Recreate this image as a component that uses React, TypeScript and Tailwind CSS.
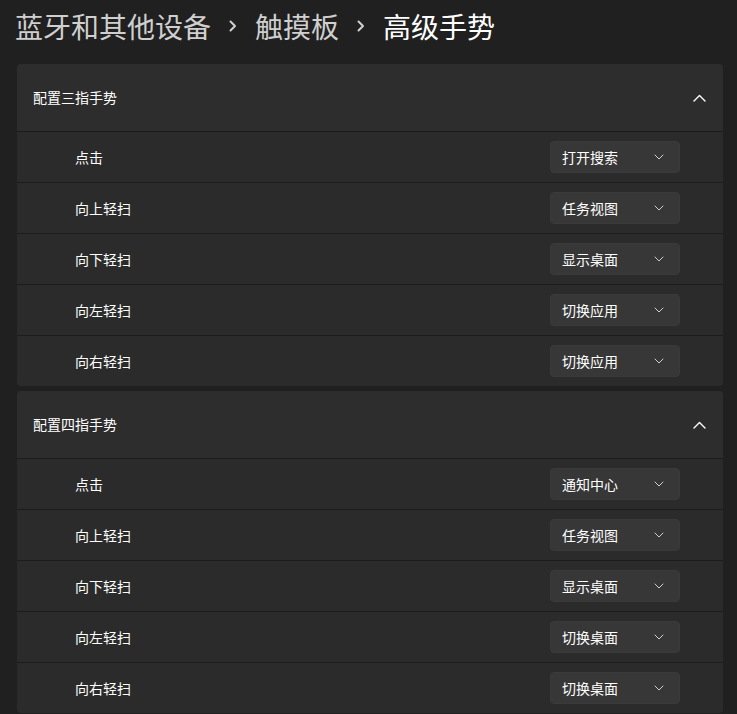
import React from "react";

const font = { fontFamily: '"Noto Sans CJK SC", "Noto Sans", sans-serif' };

type Row = { label: string; value: string };

const groups: { title: string; rows: Row[] }[] = [
  {
    title: "配置三指手势",
    rows: [
      { label: "点击", value: "打开搜索" },
      { label: "向上轻扫", value: "任务视图" },
      { label: "向下轻扫", value: "显示桌面" },
      { label: "向左轻扫", value: "切换应用" },
      { label: "向右轻扫", value: "切换应用" },
    ],
  },
  {
    title: "配置四指手势",
    rows: [
      { label: "点击", value: "通知中心" },
      { label: "向上轻扫", value: "任务视图" },
      { label: "向下轻扫", value: "显示桌面" },
      { label: "向左轻扫", value: "切换桌面" },
      { label: "向右轻扫", value: "切换桌面" },
    ],
  },
];

function ChevronDown() {
  return (
    <svg width="10" height="6" viewBox="0 0 10 6" fill="none">
      <path d="M1 1l4 4 4-4" stroke="#cfcfcf" strokeWidth="1" strokeLinecap="round" strokeLinejoin="round" />
    </svg>
  );
}

function ChevronUp() {
  return (
    <svg width="13" height="8" viewBox="0 0 13 8" fill="none">
      <path d="M1 7l5.5-5.5L12 7" stroke="#ffffff" strokeWidth="1.4" strokeLinecap="round" strokeLinejoin="round" />
    </svg>
  );
}

function BreadChevron() {
  return (
    <svg width="10" height="14" viewBox="0 0 10 14" fill="none">
      <path d="M2.5 2.5l4.5 4.5-4.5 4.5" stroke="#d0d0d0" strokeWidth="2" strokeLinecap="round" strokeLinejoin="round" />
    </svg>
  );
}

export default function App() {
  return (
    <div className="w-[737px] h-[714px] overflow-hidden bg-[#202020] text-white" style={font}>
      <div className="flex items-center h-[53px] pl-[15px] pb-[2px] text-[28px] leading-none">
        <span className="text-[#cfcfcf]">蓝牙和其他设备</span>
        <span className="mx-[17px] flex items-center"><BreadChevron /></span>
        <span className="text-[#cfcfcf]">触摸板</span>
        <span className="mx-[17px] flex items-center"><BreadChevron /></span>
        <span className="text-white">高级手势</span>
      </div>
      <div className="flex flex-col gap-[5px] mt-[11px] pl-[17px] w-[723px]">
        {groups.map((g) => (
          <div key={g.title} className="bg-[#2b2b2b] rounded-[4px] overflow-hidden">
            <div className="h-[67px] flex items-center justify-between pl-[16px] pr-[17px] bg-[#2d2d2d]">
              <span className="text-[14px] text-white">{g.title}</span>
              <ChevronUp />
            </div>
            {g.rows.map((r, i) => (
              <div
                key={i}
                className="h-[51px] flex items-center pl-[58px] pr-[43px] justify-between border-t border-[#1c1c1c]"
              >
                <span className="text-[14px] text-white">{r.label}</span>
                <div className="w-[130px] h-[32px] rounded-[4px] bg-[#373737] border border-[#3a3a3a] flex items-center justify-between pl-[11px] pr-[15px]">
                  <span className="text-[14px] text-white">{r.value}</span>
                  <ChevronDown />
                </div>
              </div>
            ))}
          </div>
        ))}
      </div>
    </div>
  );
}
